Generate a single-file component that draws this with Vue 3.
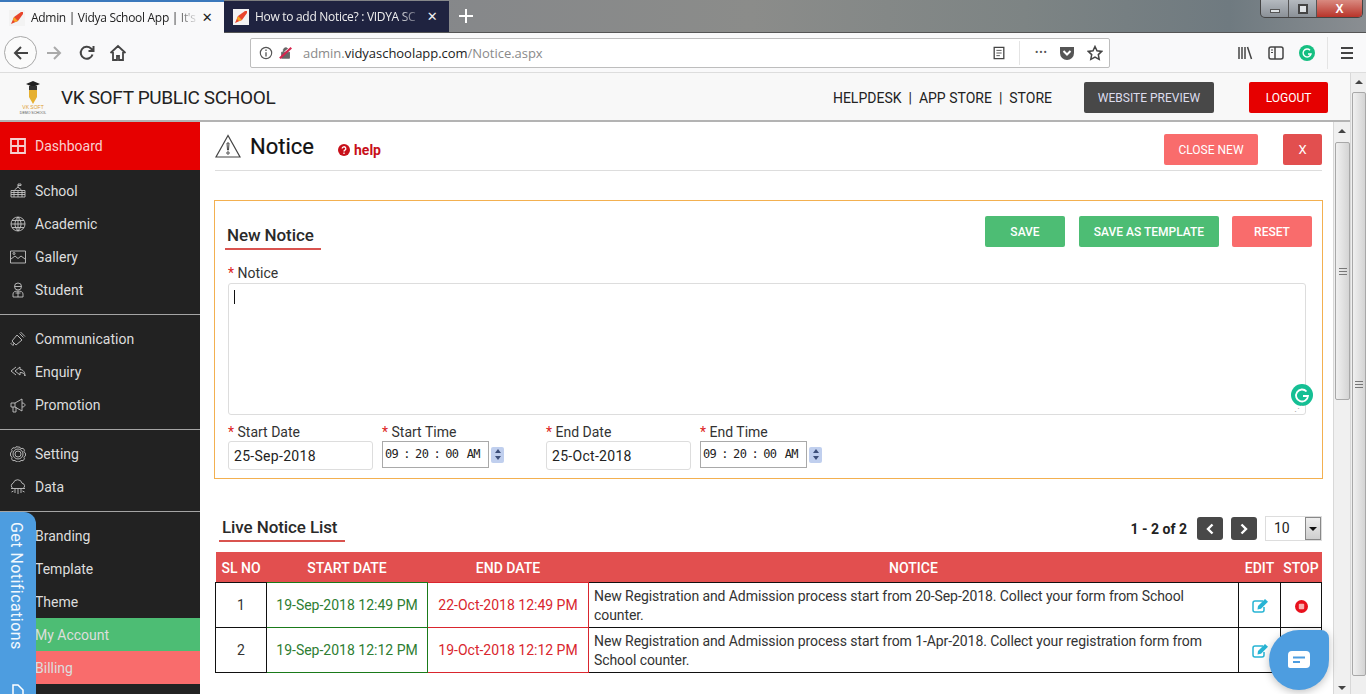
<template>
  <div class="page">
    <!-- browser tabs -->
    <div class="tabbar">
      <div class="tab active">
        <svg class="favicon" viewBox="0 0 16 16"><rect width="16" height="16" fill="#f3f3f3"/><path d="M2 14l3-7 7-5 2 0 0 2-5 7z" fill="#e8452c"/><path d="M5 7l4 4-3 1-2-2z" fill="#f5a623"/></svg>
        <span class="tab-title">Admin | Vidya School App | It's</span>
        <span class="tab-close">✕</span>
      </div>
      <div class="tab dark">
        <svg class="favicon" viewBox="0 0 16 16"><rect width="16" height="16" fill="#f3f3f3"/><path d="M2 14l3-7 7-5 2 0 0 2-5 7z" fill="#e8452c"/><path d="M5 7l4 4-3 1-2-2z" fill="#f5a623"/></svg>
        <span class="tab-title">How to add Notice? : VIDYA SC</span>
        <span class="tab-close">✕</span>
      </div>
      <svg class="newtab" viewBox="0 0 14 14"><path d="M7 0v14M0 7h14" stroke="#fff" stroke-width="2"/></svg>
      <div class="winctl">
        <span class="win-btn"><i class="win-min"></i></span>
        <span class="win-btn"><i class="win-max"></i></span>
        <span class="win-btn win-close">X</span>
      </div>
    </div>

    <!-- browser toolbar -->
    <div class="toolbar">
      <div class="back">
        <svg viewBox="0 0 18 18" width="18" height="18"><path d="M16 9H3M9 3L3 9l6 6" fill="none" stroke="#444" stroke-width="2"/></svg>
      </div>
      <svg class="tool-ic fwd" viewBox="0 0 18 18"><path d="M2 9h13M9 3l6 6-6 6" fill="none" stroke="#aaa" stroke-width="2"/></svg>
      <svg class="tool-ic reload" viewBox="0 0 18 18"><path d="M14.500 10.500A6 6 0 1 1 13 4.500L15 6.500M15.500 2v5h-5" fill="none" stroke="#444" stroke-width="2"/></svg>
      <svg class="tool-ic home" viewBox="0 0 18 18"><path d="M1.500 9L9 2l7.500 7M4 8v8h4v-4h2v4h4V8" fill="none" stroke="#444" stroke-width="1.800"/></svg>
      <div class="urlbar">
        <svg class="url-ic" viewBox="0 0 16 16"><circle cx="8" cy="8" r="6.500" fill="none" stroke="#555" stroke-width="1.300"/><path d="M8 7v5M8 4v1.600" stroke="#555" stroke-width="1.500"/></svg>
        <svg class="url-ic lock" viewBox="0 0 16 16"><path d="M3 7h9v7H3zM5 7V4a3 3 0 0 1 5-1" fill="#666" stroke="#666"/><path d="M1 14L14 2" stroke="#d7264f" stroke-width="2.500"/></svg>
        <span class="url"><span class="url-dim">admin.</span>vidyaschoolapp.com<span class="url-dim">/Notice.aspx</span></span>
        <svg class="url-ic reader" viewBox="0 0 16 16"><path d="M2.500 1.500h11v13h-11z" fill="none" stroke="#444" stroke-width="1.500" /><path d="M5 5h6M5 8h6M5 11h4" stroke="#444"/></svg>
        <i class="url-sep"></i>
        <span class="dots">•••</span>
        <svg class="url-ic pocket" viewBox="0 0 16 16"><path d="M1 2h14v6a7 7 0 0 1-14 0z" fill="#555"/><path d="M4.500 6L8 9.500 11.500 6" fill="none" stroke="#fff" stroke-width="2"/></svg>
        <svg class="url-ic star" viewBox="0 0 16 16"><path d="M8 1.500l2 4.300 4.700.6-3.400 3.200.9 4.700L8 12l-4.200 2.300.9-4.700L1.300 6.400 6 5.800z" fill="none" stroke="#444" stroke-width="1.500"/></svg>
      </div>
      <div class="tool-right">
        <svg class="tool-ic" viewBox="0 0 16 16"><path d="M2 2v12M5 2v12M8 2v12M10.500 2l4 12" stroke="#444" stroke-width="1.500" fill="none"/></svg>
        <svg class="tool-ic" viewBox="0 0 16 16"><rect x="1" y="2" width="14" height="12" rx="2" fill="none" stroke="#444" stroke-width="1.500"/><path d="M7 2v12" stroke="#444" stroke-width="1.500"/><path d="M3 5h2M3 7.500h2" stroke="#444"/></svg>
        <span class="g-small">
          <svg viewBox="0 0 16 16" width="16" height="16"><circle cx="8" cy="8" r="8" fill="#15bf81"/><path d="M11 5.200A4 4 0 1 0 12 9H9" fill="none" stroke="#fff" stroke-width="1.400"/></svg>
        </span>
        <i class="tool-sep"></i>
        <svg class="tool-ic" viewBox="0 0 16 16"><path d="M2 3h12M2 8h12M2 13h12" stroke="#444" stroke-width="1.800"/></svg>
      </div>
    </div>

    <!-- website -->
    <div class="site">
      <div class="site-inner">
        <header class="header">
          <svg class="logo" viewBox="0 0 30 36" width="30" height="36">
            <path d="M15 1l7 3-7 3-7-3z" fill="#222"/>
            <path d="M11 6h8v11l-4 7-4-7z" fill="#e6b030"/>
            <path d="M11 6h8v4h-8z" fill="#333"/>
            <text x="15" y="29" class="logo-t1" text-anchor="middle">VK SOFT</text>
            <text x="15" y="34" class="logo-t2" text-anchor="middle">DEMO SCHOOL</text>
          </svg>
          <div class="school">VK SOFT PUBLIC SCHOOL</div>
          <nav class="topnav">
            <span>HELPDESK</span><span class="pipe">|</span><span>APP STORE</span><span class="pipe">|</span><span>STORE</span>
          </nav>
          <button class="btn-preview">WEBSITE PREVIEW</button>
          <button class="btn-logout">LOGOUT</button>
        </header>

        <div class="body">
          <aside class="sidebar">
            <div class="dash">
              <svg class="side-ic" viewBox="0 0 16 16"><path d="M1 1h14v14H1zM8 1v14M1 8h14" fill="none" stroke="#f6cfcf" stroke-width="1.800"/></svg>
              <span>Dashboard</span>
            </div>
            <div v-for="(group, i) in menu" :key="i" class="group" :class="{ first: i === 0, last: i === 3 }">
              <div v-for="item in group" :key="item.label" class="row" :class="item.cls">
                <svg v-if="item.icon" class="side-ic" viewBox="0 0 16 16"><path :d="item.icon" fill="none" stroke="#c4c4c4" stroke-width="0.900"/></svg>
                <span>{{ item.label }}</span>
              </div>
            </div>
          </aside>

          <main class="main">
            <div class="title-row">
              <svg class="warn" viewBox="0 0 26 24" width="26" height="24"><path d="M13 1.500L1 23h24z" fill="none" stroke="#444" stroke-width="1.200"/><path d="M12 9h2l-.5 7h-1z" fill="none" stroke="#444"/><circle cx="13" cy="19" r="1.200" fill="none" stroke="#444"/></svg>
              <h1 class="title">Notice</h1>
              <a class="help">
                <svg viewBox="0 0 12 12" width="12" height="12"><circle cx="6" cy="6" r="6" fill="#c8101a"/><path d="M4.200 4.600a1.800 1.800 0 1 1 2.700 1.500c-.6.400-.9.600-.9 1.300" fill="none" stroke="#fff" stroke-width="1.300"/><path d="M6 8.500V10" stroke="#fff" stroke-width="1.300"/></svg>
                help
              </a>
              <button class="btn btn-close">CLOSE NEW</button>
              <button class="btn btn-x">X</button>
            </div>

            <section class="panel">
              <div class="panel-head">
                <h2 class="heading">New Notice</h2>
                <div class="panel-actions">
                  <button class="btn btn-green save">SAVE</button>
                  <button class="btn btn-green tpl">SAVE AS TEMPLATE</button>
                  <button class="btn btn-reset">RESET</button>
                </div>
              </div>
              <label class="lbl"><b>*</b> Notice</label>
              <div class="textarea">
                <i class="caret"></i>
                <span class="grammarly">
                  <svg viewBox="0 0 22 22" width="22" height="22"><circle cx="11" cy="11" r="11" fill="#15bf94"/><path d="M15.500 7.500A6 6 0 1 0 17 12h-5" fill="none" stroke="#fff" stroke-width="1.800"/></svg>
                </span>
                <span class="resize">⋰</span>
              </div>
              <div class="fields">
                <div class="field date">
                  <label class="lbl"><b>*</b> Start Date</label>
                  <div class="date-box">25-Sep-2018</div>
                </div>
                <div class="field time">
                  <label class="lbl"><b>*</b> Start Time</label>
                  <div class="time-wrap">
                    <div class="time-box">09 : 20 : 00 <span class="ampm">AM</span></div>
                    <span class="spin"><i class="up"></i><i class="down"></i></span>
                  </div>
                </div>
                <div class="field date">
                  <label class="lbl"><b>*</b> End Date</label>
                  <div class="date-box">25-Oct-2018</div>
                </div>
                <div class="field time">
                  <label class="lbl"><b>*</b> End Time</label>
                  <div class="time-wrap">
                    <div class="time-box">09 : 20 : 00 <span class="ampm">AM</span></div>
                    <span class="spin"><i class="up"></i><i class="down"></i></span>
                  </div>
                </div>
              </div>
            </section>

            <div class="list-head">
              <h2 class="heading live">Live Notice List</h2>
              <div class="pager">
                <span class="count">1 - 2 of 2</span>
                <button class="page-btn"><svg viewBox="0 0 10 12" width="10" height="12"><path d="M7.500 1.500L3 6l4.500 4.500" fill="none" stroke="#fff" stroke-width="2.400"/></svg></button>
                <button class="page-btn"><svg viewBox="0 0 10 12" width="10" height="12"><path d="M2.500 1.500L7 6l-4.500 4.500" fill="none" stroke="#fff" stroke-width="2.400"/></svg></button>
                <div class="select">
                  <span>10</span>
                  <i class="select-arrow"></i>
                </div>
              </div>
            </div>

            <table class="grid">
              <colgroup>
                <col class="c-no" />
                <col class="c-date" />
                <col class="c-date" />
                <col />
                <col class="c-edit" />
                <col class="c-stop" />
              </colgroup>
              <thead>
                <tr>
                  <th>SL NO</th>
                  <th>START DATE</th>
                  <th>END DATE</th>
                  <th>NOTICE</th>
                  <th>EDIT</th>
                  <th>STOP</th>
                </tr>
              </thead>
              <tbody>
                <tr v-for="row in notices" :key="row.no">
                  <td class="center">{{ row.no }}</td>
                  <td class="center start">{{ row.start }}</td>
                  <td class="center end">{{ row.end }}</td>
                  <td class="text">{{ row.text }}</td>
                  <td class="center">
                    <svg class="edit" viewBox="0 0 16 14" width="16" height="14"><path d="M11 2H3a2 2 0 0 0-2 2v7a2 2 0 0 0 2 2h7a2 2 0 0 0 2-2V8" fill="none" stroke="#27b4d4" stroke-width="1.500"/><path d="M6 7l7-7 3 2.800-7 7-3.500.7z" fill="#27b4d4"/></svg>
                  </td>
                  <td class="center">
                    <svg class="stop" viewBox="0 0 13 13" width="13" height="13"><circle cx="6.500" cy="6.500" r="6.500" fill="#e8101c"/><rect x="3.800" y="3.800" width="5.400" height="5.400" rx="1" fill="#f8b0b0"/></svg>
                  </td>
                </tr>
              </tbody>
            </table>
          </main>

          <div class="scroll inner-scroll">
            <i class="arrow-up"></i>
            <div class="thumb inner-thumb"><span class="grip"></span></div>
            <i class="arrow-down"></i>
          </div>
        </div>
      </div>
      <div class="scroll outer-scroll">
        <i class="arrow-up"></i>
        <div class="thumb outer-thumb"><span class="grip"></span></div>
      </div>
    </div>

    <!-- overlays -->
    <div class="notif-tab">
      <span class="notif-text">Get Notifications</span>
      <svg class="notif-ic" viewBox="0 0 14 14" width="14" height="14"><path d="M2 1h5l5 5v8H2z" fill="none" stroke="#fff" stroke-width="1.500"/></svg>
    </div>
    <div class="chat">
      <svg viewBox="0 0 24 20" width="24" height="20"><path d="M5 1h14a4 4 0 0 1 4 4v9a4 4 0 0 1-4 4H3a2 2 0 0 1-2-2V5a4 4 0 0 1 4-4z" fill="#fff"/><path d="M6 7.500h12M6 12h7" stroke="#4d9de0" stroke-width="1.800"/></svg>
    </div>
  </div>
</template>

<script setup>
import { ref } from "vue";

const menu = ref([
  [
    { label: "School", icon: "M8 1v3M8 1h3v1.500H8M4.500 7L8 4l3.500 3M1 7.500h14V14H1zM1 9.500h14M1 11.500h14M4 7.500V14M8 7.500V14M12 7.500V14" },
    { label: "Academic", icon: "M8 1a7 7 0 1 0 0 14A7 7 0 1 0 8 1M8 1C4 5 4 11 8 15M8 1c4 4 4 10 0 14M1 8h14M2 4.500h12M2 11.500h12M8 1v14" },
    { label: "Gallery", icon: "M.5 2h15v12H.5zM1 10l4-3 3 2.500L11 7l4 3M3 4.500a1 1 0 1 0 2 0a1 1 0 1 0-2 0" },
    { label: "Student", icon: "M8 1a3.500 3.500 0 1 0 0 7a3.500 3.500 0 1 0 0-7M4.500 4.500h7M3 15v-3c0-2 2-3 5-3s5 1 5 3v3zM8 9v6M5.500 11h5" },
  ],
  [
    { label: "Communication", icon: "M2 10l5-6 5 5-6 5zM4 12l-1 2.500-2-2 1-1M9.500 2.500l4 4M10.500 1l4.500 4.500M8 5l3 3" },
    { label: "Enquiry", icon: "M6 3L1 7l5 4M10 3L5 7l5 4V8.500c3 0 4.500 1 5 3.500c0-4-2-6.500-5-6.500z" },
    { label: "Promotion", icon: "M1 6h4l7-4v12l-7-4H1zM5 6v4M3 10v5h3v-5M12 6c2 0 3 1 3 2s-1 2-3 2" },
  ],
  [
    { label: "Setting", icon: "M8 5a3 3 0 1 0 0 6a3 3 0 1 0 0-6M8 3a5 5 0 1 0 0 10a5 5 0 1 0 0-10M8 1a7 7 0 0 1 2 .3l.5 1 1.500.3 1-.4 1.500 2-.6 1 .6 1.500 1 .5v2.600l-1 .5-.6 1.500.6 1-1.500 2-1-.4-1.500.3-.5 1a7 7 0 0 1-4 0l-.5-1-1.500-.3-1 .4-1.500-2 .6-1-.6-1.500-1-.5V6.700l1-.5.6-1.500-.6-1 1.500-2 1 .4 1.500-.3.5-1A7 7 0 0 1 8 1" },
    { label: "Data", icon: "M3 9.500a3 3 0 0 1 .3-5.500A4.500 4.500 0 0 1 12 4.200a2.800 2.800 0 0 1 1 5.300M1 9.500h14M5 9.500V14M8 9.500V15M11 9.500V14M3.500 12L1.500 13M12.500 12l2 1" },
  ],
  [
    { label: "Branding" },
    { label: "Template" },
    { label: "Theme" },
    { label: "My Account", cls: "green" },
    { label: "Billing", cls: "red" },
  ],
]);

const notices = ref([
  {
    no: 1,
    start: "19-Sep-2018 12:49 PM",
    end: "22-Oct-2018 12:49 PM",
    text: "New Registration and Admission process start from 20-Sep-2018. Collect your form from School counter.",
  },
  {
    no: 2,
    start: "19-Sep-2018 12:12 PM",
    end: "19-Oct-2018 12:12 PM",
    text: "New Registration and Admission process start from 1-Apr-2018. Collect your registration form from School counter.",
  },
]);
</script>

<style>
html,
body {
  margin: 0;
  overflow: hidden;
}
</style>

<style scoped>
* {
  box-sizing: border-box;
}

.page {
  position: relative;
  height: 694px;
  width: 1366px;
  display: flex;
  flex-direction: column;
  overflow: hidden;
  font-family: Roboto, "Liberation Sans", sans-serif;
  font-size: 14px;
  color: #333;
  background: #fff;
}

/* tab bar */
.tabbar {
  height: 33px;
  flex: none;
  display: flex;
  align-items: stretch;
  position: relative;
  background: linear-gradient(90deg, #6d6e6c 0%, #85878a 30%, #8b8c8a 55%, #7d8484 75%, #6f7a80 90%, #8a8e92 100%);
  border-bottom: 1px solid #555;
}

.tab {
  width: 224px;
  display: flex;
  align-items: center;
  padding: 0 9px;
  font-family: "Open Sans", "Liberation Sans", sans-serif;
  font-size: 12px;
  letter-spacing: -0.300px;
  overflow: hidden;
}

.tab.active {
  background: #f9f9fa;
  color: #222;
  border-top: 2px solid #3a78bc;
  height: 33px;
}

.tab.dark {
  width: 225px;
  background: #1f2340;
  color: #eee;
  margin-top: 1px;
}

.favicon {
  width: 16px;
  height: 16px;
  flex: none;
  margin-right: 6px;
}

.tab-title {
  flex: 1;
  white-space: nowrap;
  overflow: hidden;
  -webkit-mask-image: linear-gradient(90deg, #000 85%, transparent 100%);
  mask-image: linear-gradient(90deg, #000 85%, transparent 100%);
}

.tab-close {
  font-size: 13px;
  font-weight: 700;
  width: 16px;
  text-align: center;
  font-family: "DejaVu Sans", sans-serif;
}

.newtab {
  width: 14px;
  height: 14px;
  margin: 9px 0 0 10px;
}

.winctl {
  position: absolute;
  top: 0;
  right: 3px;
  width: 103px;
  height: 18px;
  display: flex;
  border: 1px solid #444;
  border-top: none;
  border-radius: 0 0 5px 5px;
  overflow: hidden;
  background: linear-gradient(#b5babf, #8a9097);
}

.win-btn {
  width: 28px;
  display: flex;
  align-items: center;
  justify-content: center;
  border-right: 1px solid #555;
}

.win-close {
  flex: 1;
  border: none;
  background: linear-gradient(#d98a80, #b8342a);
  color: #fff;
  font-weight: 700;
  font-size: 12px;
  font-family: "Liberation Sans", sans-serif;
}

.win-min {
  width: 10px;
  height: 4px;
  margin-top: 4px;
  background: #dfe3e6;
  border: 1px solid #555;
}

.win-max {
  width: 10px;
  height: 10px;
  background: #dfe3e6;
  border: 2px solid #444;
}

/* toolbar */
.toolbar {
  height: 40px;
  flex: none;
  display: flex;
  align-items: center;
  padding-left: 4px;
  background: #f9f9fa;
  border-bottom: 1px solid #ddd;
}

.back {
  width: 33px;
  height: 33px;
  border: 1px solid #a8a8a8;
  border-radius: 50%;
  background: #fbfbfb;
  display: flex;
  align-items: center;
  justify-content: center;
}

.tool-ic {
  width: 16px;
  height: 16px;
  flex: none;
}

.fwd {
  margin-left: 8px;
  width: 18px;
  height: 18px;
}

.reload {
  margin-left: 15px;
  width: 18px;
  height: 18px;
}

.home {
  margin-left: 13px;
  width: 18px;
  height: 18px;
}

.urlbar {
  margin-left: 123px;
  width: 860px;
  height: 30px;
  display: flex;
  align-items: center;
  background: #fff;
  border: 1px solid #bdbdbd;
  border-radius: 2px;
  padding: 0 6px 0 8px;
}

.url-ic {
  width: 14px;
  height: 14px;
  flex: none;
}

.lock {
  margin-left: 6px;
}

.url {
  margin-left: 10px;
  padding-top: 1px;
  flex: 1;
  font-family: "Open Sans", "Liberation Sans", sans-serif;
  font-size: 13px;
  letter-spacing: -0.030px;
  color: #222;
}

.url-dim {
  color: #8a8a8a;
}

.reader {
  margin-right: 13px;
}

.url-sep {
  width: 1px;
  height: 24px;
  background: #e4e4e4;
  margin-right: 15px;
}

.dots {
  font-size: 10px;
  letter-spacing: 1px;
  color: #555;
  margin-right: 11px;
}

.pocket {
  width: 16px;
  height: 16px;
  margin-right: 12px;
}

.star {
  width: 16px;
  height: 16px;
}

.tool-right {
  margin-left: 127px;
  display: flex;
  align-items: center;
  gap: 15px;
}

.g-small {
  display: flex;
}

.tool-sep {
  width: 1px;
  height: 32px;
  background: #e4e4e4;
  margin: 0 -4px 0 -3px;
}

/* site */
.site {
  flex: 1;
  min-height: 0;
  display: flex;
}

.site-inner {
  flex: 1;
  min-width: 0;
  display: flex;
  flex-direction: column;
}

.header {
  height: 49px;
  flex: none;
  display: flex;
  align-items: center;
  background: #f8f8f8;
  border-bottom: 2px solid #b3b3b3;
  padding: 2px 0 0 18px;
}

.logo {
  flex: none;
}

.logo-t1 {
  font-size: 5px;
  fill: #e0a030;
  font-family: "Liberation Sans", sans-serif;
}

.logo-t2 {
  font-size: 3.500px;
  fill: #555;
  font-family: "Liberation Sans", sans-serif;
}

.school {
  margin-left: 13px;
  font-size: 19px;
  color: #222;
  letter-spacing: -0.350px;
}

.topnav {
  margin-left: auto;
  font-size: 14px;
  color: #222;
  white-space: nowrap;
}

.pipe {
  margin: 0 7px;
}

.btn-preview,
.btn-logout {
  height: 31px;
  border: none;
  border-radius: 2px;
  font-family: inherit;
  font-size: 12px;
  color: #fff;
}

.btn-preview {
  width: 130px;
  margin-left: 32px;
  background: #484848;
  color: #dde;
}

.btn-logout {
  width: 79px;
  margin: 0 22px 0 35px;
  background: #e60000;
}

.body {
  flex: 1;
  min-height: 0;
  display: flex;
}

/* sidebar */
.sidebar {
  width: 200px;
  flex: none;
  background: #222;
  color: #ddd;
  overflow: hidden;
}

.dash {
  height: 48px;
  background: #e60000;
  color: #f9cfcf;
  display: flex;
  align-items: center;
  padding-left: 10px;
}

.side-ic {
  width: 16px;
  height: 16px;
  flex: none;
  margin-right: 9px;
}

.group {
  padding: 7px 0 8px;
  border-bottom: 1px solid #a5a5a5;
}

.group.first {
  padding-top: 4px;
}

.group.last {
  border-bottom: none;
}

.row {
  height: 33px;
  display: flex;
  align-items: center;
  padding-left: 10px;
}

.group.last .row {
  padding-left: 35px;
}

.row.green {
  background: #4dbd74;
}

.row.red {
  background: #f96c6c;
}

/* main */
.main {
  flex: 1;
  min-width: 0;
  overflow: hidden;
  padding: 0 10px 0 14px;
}

.title-row {
  height: 49px;
  margin-left: 1px;
  margin-right: 1px;
  display: flex;
  align-items: center;
  border-bottom: 1px solid #ddd;
  padding: 11px 0 4px;
}

.warn {
  flex: none;
  margin-bottom: 7px;
}

.title {
  margin: 0 0 7px 9px;
  font-size: 22px;
  font-weight: 400;
  color: #111;
  -webkit-text-stroke: 0.200px #111;
}

.help {
  margin-left: 24px;
  display: flex;
  align-items: center;
  gap: 4px;
  color: #c8101a;
  font-size: 14px;
  font-weight: 700;
}

.btn {
  height: 31px;
  border: none;
  border-radius: 2px;
  font-family: inherit;
  font-size: 12px;
  color: #fff;
  flex: none;
}

.btn-close {
  margin-left: auto;
  width: 94px;
  background: #f96c6c;
}

.btn-x {
  margin-left: 25px;
  width: 39px;
  background: #e24f4f;
  font-size: 13px;
}

.panel {
  margin-top: 29px;
  height: 279px;
  border: 1px solid #f3b050;
  padding: 15px 10px 0 13px;
}

.panel-head {
  display: flex;
  align-items: flex-start;
  justify-content: space-between;
  height: 48px;
}

.heading {
  margin: 9px 0 0 -3px;
  padding: 0 7px 3px 2px;
  font-size: 17px;
  font-weight: 500;
  line-height: 20px;
  letter-spacing: -0.100px;
  color: #2a2a2a;
  border-bottom: 2px solid #d9534f;
  display: inline-block;
}

.panel-actions {
  display: flex;
  gap: 14px;
}

.save {
  width: 80px;
}

.tpl {
  width: 140px;
}

.btn-green {
  background: #4dbd74;
  font-weight: 500;
}

.btn-reset {
  width: 80px;
  margin-left: -1px;
  background: #f96c6c;
  font-weight: 500;
}

.lbl {
  display: block;
  font-size: 14px;
  line-height: 18px;
  color: #333;
}

.lbl b {
  color: #d22;
  font-weight: 400;
}

.textarea {
  position: relative;
  height: 132px;
  width: 1078px;
  margin-top: 1px;
  border: 1px solid #ddd;
  border-radius: 3px;
  background: #fff;
}

.caret {
  position: absolute;
  left: 5px;
  top: 6px;
  width: 1px;
  height: 14px;
  background: #111;
}

.grammarly {
  position: absolute;
  right: -8px;
  bottom: 8px;
  display: flex;
}

.resize {
  position: absolute;
  right: 2px;
  bottom: 0;
  font-size: 9px;
  line-height: 9px;
  color: #aaa;
}

.fields {
  display: flex;
  margin-top: 8px;
}

.field.date {
  width: 154px;
}

.field.time {
  width: 164px;
}

.date-box {
  width: 145px;
  height: 29px;
  border: 1px solid #ddd;
  border-radius: 3px;
  padding-left: 5px;
  line-height: 28px;
  font-size: 14px;
  letter-spacing: 0.300px;
  color: #222;
}

.time-wrap {
  display: flex;
  align-items: center;
}

.time-box {
  width: 107px;
  height: 27px;
  border: 1px solid #a9a9a9;
  padding-left: 2px;
  line-height: 25px;
  font-family: "DejaVu Sans Mono", monospace;
  font-size: 12px;
  letter-spacing: -0.600px;
  word-spacing: -1.500px;
  color: #222;
  white-space: nowrap;
}

.ampm {
  margin-left: 3px;
}

.spin {
  width: 13px;
  height: 16px;
  margin-left: 2px;
  background: #c0cfee;
  border-radius: 2px;
  display: flex;
  flex-direction: column;
  align-items: center;
  justify-content: center;
  gap: 3px;
}

.spin i {
  width: 0;
  height: 0;
  border-left: 3px solid transparent;
  border-right: 3px solid transparent;
}

.spin .up {
  border-bottom: 4px solid #3d4f7a;
}

.spin .down {
  border-top: 4px solid #3d4f7a;
}

/* list */
.list-head {
  margin-top: 38px;
  height: 35px;
  display: flex;
  justify-content: space-between;
  align-items: flex-start;
}

.heading.live {
  margin: 0 0 0 5px;
  padding: 0 8px 3px 3px;
}

.pager {
  display: flex;
  align-items: center;
  height: 25px;
  margin: -1px 1px 0 0;
}

.count {
  font-weight: 700;
  font-size: 14px;
  color: #222;
  margin-right: 10px;
}

.page-btn {
  width: 26px;
  height: 23px;
  padding: 0;
  border: none;
  border-radius: 3px;
  background: #484848;
  margin-right: 8px;
  display: flex;
  align-items: center;
  justify-content: center;
}

.select {
  width: 57px;
  height: 25px;
  border: 1px solid #ddd;
  position: relative;
  padding-left: 8px;
  line-height: 23px;
  font-size: 14px;
  color: #222;
}

.select-arrow {
  position: absolute;
  right: 0;
  top: 0;
  width: 16px;
  height: 23px;
  background: linear-gradient(#eee, #cfcfcf);
  border: 1px solid #888;
}

.select-arrow::after {
  content: "";
  position: absolute;
  left: 3px;
  top: 9px;
  border-left: 4px solid transparent;
  border-right: 4px solid transparent;
  border-top: 4px solid #111;
}

.grid {
  width: 1107px;
  margin-left: 1px;
  border-collapse: collapse;
  table-layout: fixed;
  font-size: 14px;
}

.c-no {
  width: 51px;
}

.c-date {
  width: 161px;
}

.c-edit {
  width: 42px;
}

.c-stop {
  width: 41px;
}

.grid th {
  height: 30px;
  padding: 2px 0 0;
  background: #e24f4f;
  color: #fff;
  font-size: 14px;
  font-weight: 500;
  white-space: nowrap;
}

.grid td {
  height: 45px;
  border: 1px solid #111;
  padding: 2px 5px 0;
  line-height: 19px;
  letter-spacing: -0.080px;
  color: #333;
}

.grid td.center {
  text-align: center;
  padding: 2px 0 0;
  letter-spacing: 0;
}

.grid td.start {
  color: #2e7d32;
  border-color: #1a7a1a;
}

.grid td.end {
  color: #d9262e;
  border-color: #d9262e;
}

.grid td svg {
  vertical-align: middle;
}

/* fake scrollbars */
.scroll {
  position: relative;
  width: 16px;
  flex: none;
  background: #efefef;
  border-left: 1px solid #d8d8d8;
}

.inner-scroll {
  width: 17px;
  background: #f0f0f0;
  margin-right: 0;
}

.thumb {
  position: absolute;
  left: 1px;
  right: 0;
  background: linear-gradient(90deg, #f0f0f0, #d4d4d4);
  border: 1px solid #a8a8a8;
  border-radius: 2px;
  display: flex;
  align-items: center;
  justify-content: center;
}

.inner-thumb {
  top: 20px;
  height: 258px;
}

.outer-thumb {
  top: 19px;
  height: 584px;
}

.grip {
  width: 8px;
  height: 7px;
  border-top: 1px solid #777;
  border-bottom: 1px solid #777;
  background: linear-gradient(#777, #777) center / 100% 1px no-repeat;
}

.arrow-up,
.arrow-down {
  position: absolute;
  left: 4px;
  border-left: 4px solid transparent;
  border-right: 4px solid transparent;
}

.arrow-up {
  top: 7px;
  border-bottom: 4px solid #444;
}

.arrow-down {
  bottom: 4px;
  border-top: 4px solid #444;
}

/* overlays */
.notif-tab {
  position: absolute;
  left: 0;
  top: 512px;
  width: 36px;
  height: 182px;
  background: #4d9de0;
  border-top-right-radius: 12px;
  overflow: hidden;
}

.notif-text {
  position: absolute;
  left: 6px;
  top: 10px;
  writing-mode: vertical-rl;
  font-size: 16px;
  line-height: 20px;
  letter-spacing: 0.450px;
  color: #f2f8fd;
  white-space: nowrap;
}

.notif-ic {
  position: absolute;
  left: 11px;
  top: 172px;
}

.chat {
  position: absolute;
  left: 1269px;
  top: 630px;
  width: 60px;
  height: 60px;
  background: #4d9de0;
  border-radius: 50% 8px 50% 50%;
  box-shadow: 0 2px 8px rgba(0, 0, 0, 0.25);
  display: flex;
  align-items: center;
  justify-content: center;
}
</style>
